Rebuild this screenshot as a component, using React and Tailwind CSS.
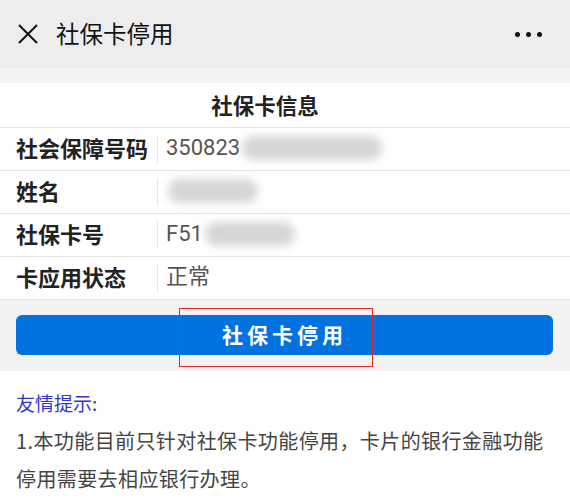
export default function App() {
  const rows = [
    { label: "社会保障号码", value: "350823", blur: "w-[140px]" },
    { label: "姓名", value: "", blur: "w-[90px]" },
    { label: "社保卡号", value: "F51", blur: "w-[90px]" },
    { label: "卡应用状态", value: "正常", blur: null },
  ];

  return (
    <div
      className="w-[570px] h-[500px] overflow-hidden bg-white"
      style={{ fontFamily: '"Noto Sans CJK SC", "Noto Sans", sans-serif' }}
    >
      {/* top bar */}
      <div className="h-[68px] bg-[#ededed] flex items-center pl-[17px] pr-[28px]">
        <svg width="22" height="22" viewBox="0 0 22 22" className="shrink-0">
          <path d="M2 2 L20 20 M20 2 L2 20" stroke="#111" strokeWidth="2" fill="none" />
        </svg>
        <span className="ml-[17px] text-[23.5px] leading-none text-[#111]">社保卡停用</span>
        <div className="ml-auto flex gap-[6px] items-center">
          <span className="w-[5px] h-[5px] rounded-full bg-[#111]" />
          <span className="w-[5px] h-[5px] rounded-full bg-[#111]" />
          <span className="w-[5px] h-[5px] rounded-full bg-[#111]" />
        </div>
      </div>
      <div className="h-[15px] bg-[#f3f3f3]" />

      {/* info card */}
      <div className="h-[45px] flex items-center justify-center pr-[40px] border-b border-[#e3e3e3]">
        <span className="text-[21.5px] font-bold text-[#222]">社保卡信息</span>
      </div>
      {rows.map((r) => (
        <div key={r.label} className="h-[43px] flex items-center border-b border-[#e3e3e3]">
          <div className="w-[157px] pl-[16px] pb-[5px] text-[22px] font-bold text-[#222] leading-[30px]">
            {r.label}
          </div>
          <div className="w-px h-[28px] bg-[#e5e5e5]" />
          <div
            className="pl-[8px] pb-[2px] flex items-center text-[22px] text-[#555] leading-[30px]"
            style={{ fontFamily: 'Roboto, "Noto Sans CJK SC", sans-serif' }}
          >
            <span>{r.value}</span>
            {r.blur && (
              <span className={`${r.blur} h-[24px] rounded-full bg-[#d6d6d6] blur-[4px] ml-[2px]`} />
            )}
          </div>
        </div>
      ))}

      {/* button area */}
      <div className="bg-[#f2f2f2] pt-[15px] pb-[16px] pl-[16px] pr-[17px]">
        <div className="relative h-[40px] rounded-[6px] bg-[#0272e0] flex items-center justify-center">
          <span className="text-white text-[21px] font-bold tracking-[4px]">社保卡停用</span>
          <div className="absolute left-[163px] top-[-7px] w-[194px] h-[59px] border-[1.5px] border-[#e02a2a]" />
        </div>
      </div>

      {/* tips */}
      <div className="px-[16px] pt-[18px]">
        <div className="text-[19px] text-[#3535c6] leading-[28px]">友情提示:</div>
        <div className="mt-[5px] text-[20px] text-[#444] leading-[38px] tracking-[0.4px]">
          1.本功能目前只针对社保卡功能停用，卡片的银行金融功能停用需要去相应银行办理。
        </div>
      </div>
    </div>
  );
}
